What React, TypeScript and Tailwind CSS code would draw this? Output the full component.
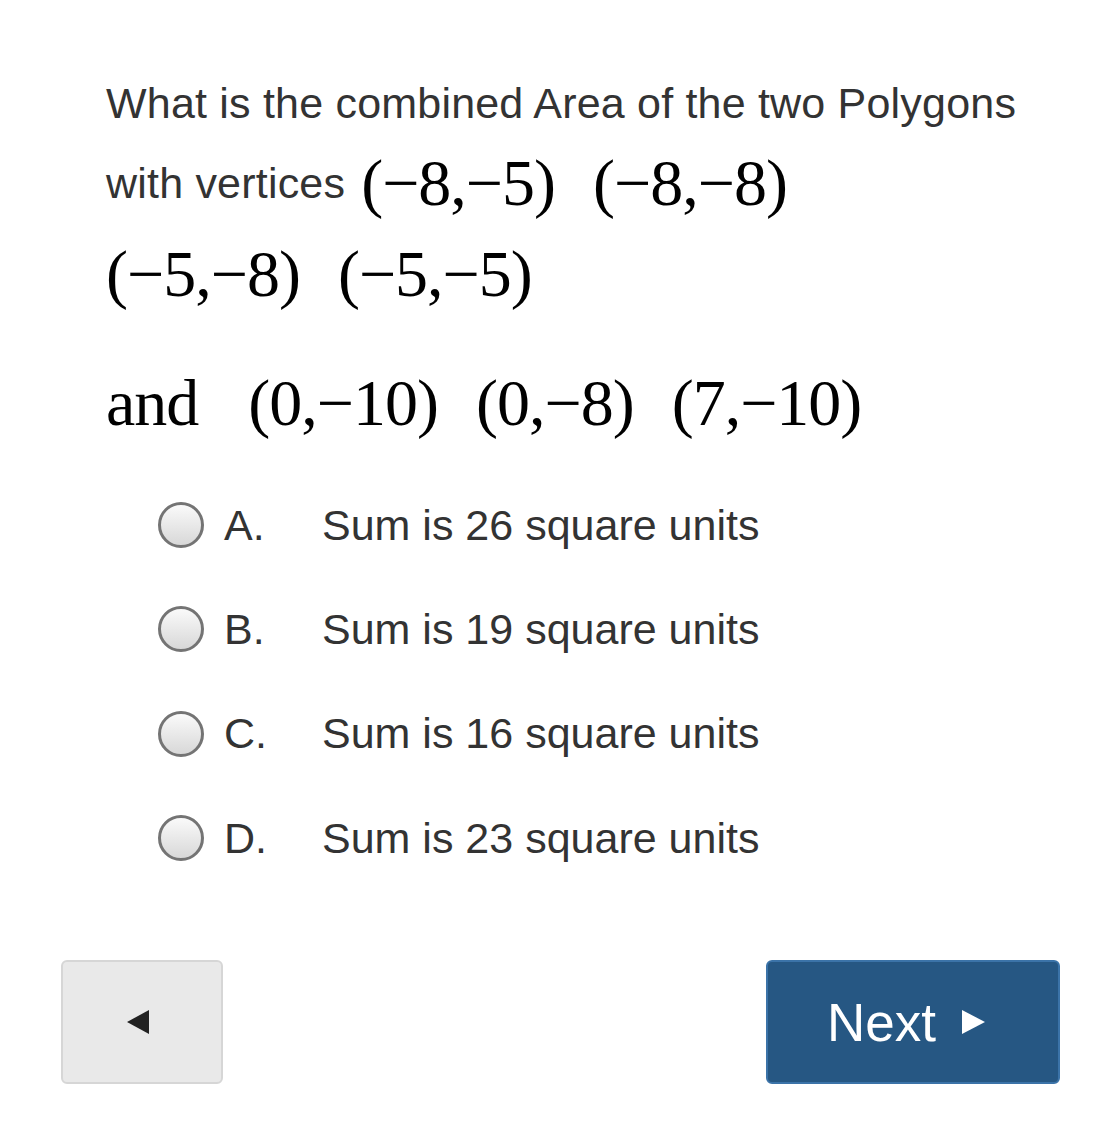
const options = [
  { letter: "A.", text: "Sum is 26 square units" },
  { letter: "B.", text: "Sum is 19 square units" },
  { letter: "C.", text: "Sum is 16 square units" },
  { letter: "D.", text: "Sum is 23 square units" },
];

const sans = "font-['Helvetica','Liberation_Sans',Arial,sans-serif]";
const serif = "font-['Liberation_Serif','Times_New_Roman',serif]";

function Radio() {
  return (
    <span className="block h-[46px] w-[46px] shrink-0 rounded-full border-[3px] border-[#747474] bg-gradient-to-b from-[#fafafa] to-[#d8d8d8]" />
  );
}

export default function App() {
  return (
    <div className={`min-h-[1122px] w-[1120px] bg-white text-[#333] ${sans}`}>
      <div className="pl-[106px] pt-[63px]">
        <p className="text-[43px] leading-[80px] tracking-[0.2px]">What is the combined Area of the two Polygons</p>

        <div className="flex h-[80px] items-center">
          <span className="text-[43px] leading-none tracking-[0.2px]">with vertices</span>
          <span className={`ml-[16px] text-[66px] leading-none tracking-[-1px] text-black ${serif}`}>(−8,−5)</span>
          <span className={`ml-[38px] text-[66px] leading-none tracking-[-1px] text-black ${serif}`}>(−8,−8)</span>
        </div>

        <div className={`mt-[18px] flex text-[66px] leading-none tracking-[-1px] text-black ${serif}`}>
          <span>(−5,−8)</span>
          <span className="ml-[38px]">(−5,−5)</span>
        </div>

        <div className={`mt-[63px] flex text-[66px] leading-none tracking-[-1px] text-black ${serif}`}>
          <span>and</span>
          <span className="ml-[50px]">(0,−10)</span>
          <span className="ml-[38px]">(0,−8)</span>
          <span className="ml-[38px]">(7,−10)</span>
        </div>

        <ul className="mt-[37px]">
          {options.map((o) => (
            <li key={o.letter} className="flex h-[104.3px] items-center pl-[52px] text-[43px] leading-none">
              <Radio />
              <span className="ml-[20px] w-[98px]">{o.letter}</span>
              <span>{o.text}</span>
            </li>
          ))}
        </ul>
      </div>

      <div className="mt-[70px] flex justify-between pl-[61px] pr-[60px]">
        <button
          type="button"
          className="flex h-[124px] w-[162px] items-center justify-center rounded-[6px] border-2 border-[#d6d6d6] bg-[#e9e9e9] pr-[8px]"
        >
          <svg width="22" height="24" viewBox="0 0 22 24">
            <polygon points="22,0 22,24 0,12" fill="#222" />
          </svg>
        </button>
        <button
          type="button"
          className="flex h-[124px] w-[294px] items-center justify-center gap-[26px] rounded-[6px] border-2 border-[#3b73a8] bg-[#265783] pr-[14px] text-white"
        >
          <span className="text-[53px] leading-none">Next</span>
          <svg width="23" height="24" viewBox="0 0 23 24">
            <polygon points="0,0 23,12 0,24" fill="#fff" />
          </svg>
        </button>
      </div>
    </div>
  );
}
